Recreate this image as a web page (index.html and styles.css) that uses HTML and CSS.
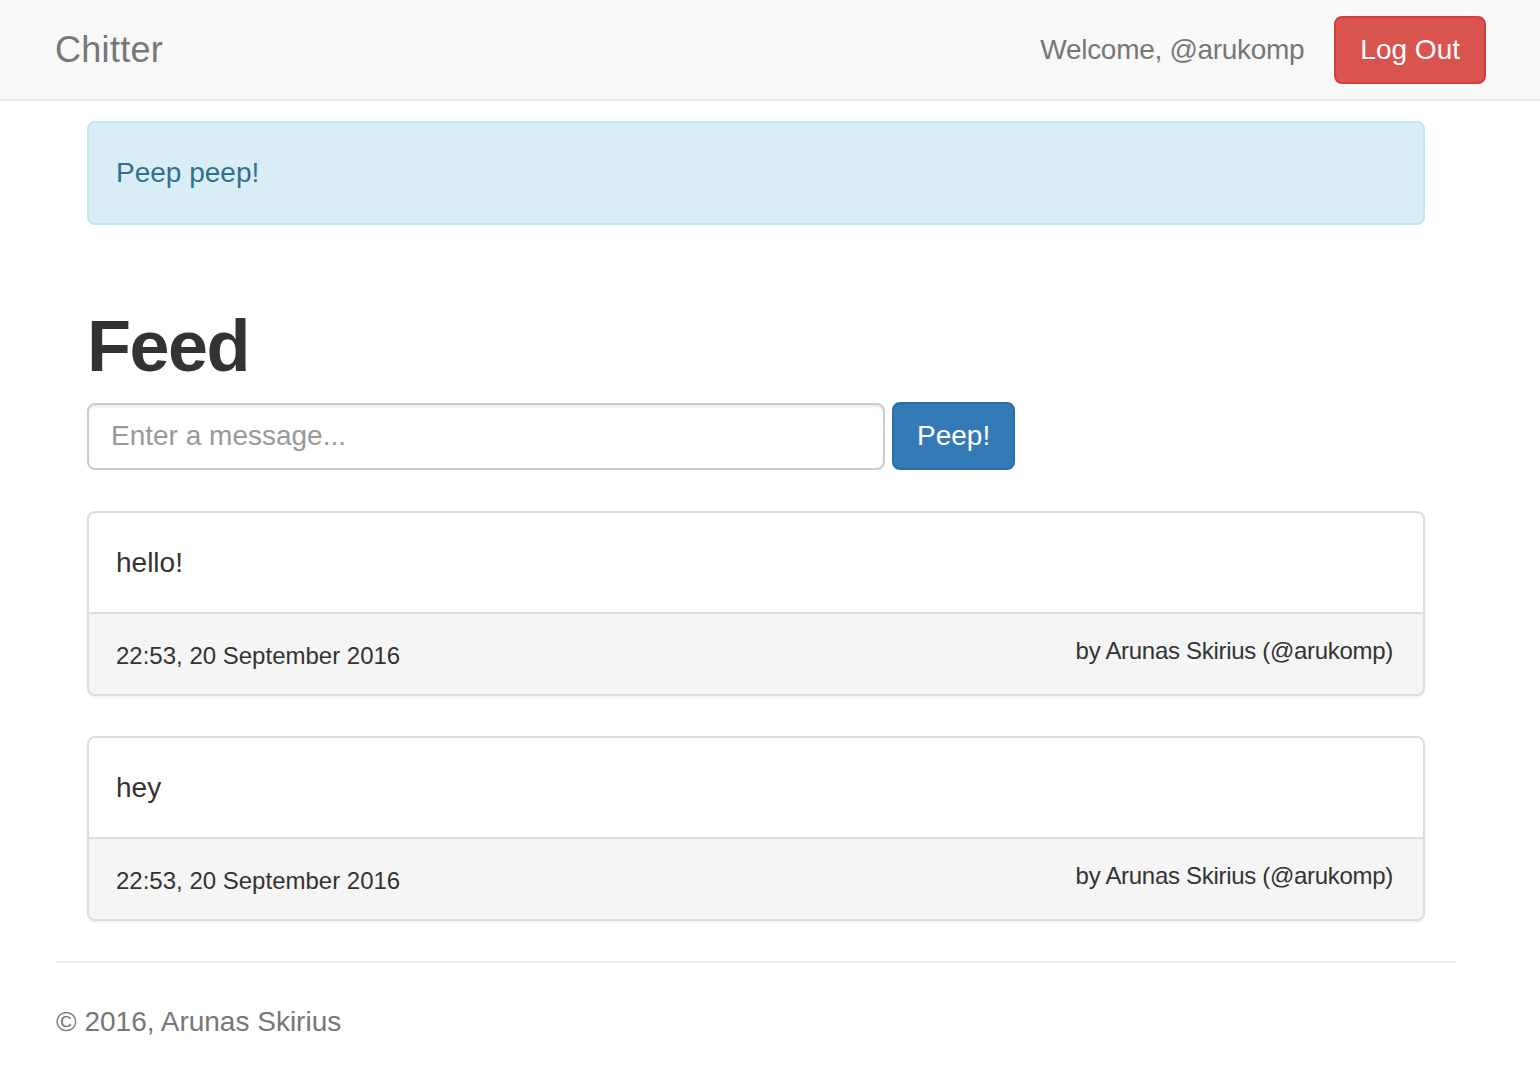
FILE: index.html
```html
<!DOCTYPE html>
<html>
<head>
<meta charset="utf-8">
<link rel="stylesheet" href="styles.css">
<title>Chitter</title>
</head>
<body>
<nav class="navbar">
  <a class="brand">Chitter</a>
  <div class="nav-right">
    <span class="welcome">Welcome, @arukomp</span>
    <button class="btn btn-danger">Log Out</button>
  </div>
</nav>
<main class="content">
  <div class="alert">Peep peep!</div>
  <h1 class="title">Feed</h1>
  <form class="peep-form">
    <input class="form-control" type="text" placeholder="Enter a message...">
    <button class="btn btn-primary" type="button">Peep!</button>
  </form>
  <div class="panel">
    <div class="panel-body">hello!</div>
    <div class="panel-footer">
      <span class="date">22:53, 20 September 2016</span>
      <span class="author">by Arunas Skirius (@arukomp)</span>
    </div>
  </div>
  <div class="panel">
    <div class="panel-body">hey</div>
    <div class="panel-footer">
      <span class="date">22:53, 20 September 2016</span>
      <span class="author">by Arunas Skirius (@arukomp)</span>
    </div>
  </div>
</main>
<footer class="site-footer">
  <hr class="rule">
  <p class="copy">© 2016, Arunas Skirius</p>
</footer>
</body>
</html>
```

FILE: styles.css
```css
* { box-sizing: border-box; }
html, body { margin: 0; padding: 0; background: #fff; }
body {
  font-family: "Liberation Sans", Arial, Helvetica, sans-serif;
  font-size: 28px;
  line-height: 40px;
  color: #333;
}
.navbar {
  height: 101px;
  background: #f8f8f8;
  border-bottom: 2px solid #e7e7e7;
  display: flex;
  align-items: center;
  justify-content: space-between;
  padding: 0 54px 0 55px;
}
.brand {
  font-size: 36px;
  color: #777;
  line-height: 40px;
  letter-spacing: 0.3px;
}
.nav-right { display: flex; align-items: center; }
.welcome { color: #777; font-size: 28px; margin-right: 30px; letter-spacing: -0.3px; }
.btn {
  font-family: inherit;
  font-size: 28px;
  line-height: 40px;
  padding: 12px 24px;
  border-radius: 8px;
  border: 2px solid transparent;
  color: #fff;
  cursor: pointer;
}
.btn-danger { background: #d9534f; border-color: #d43f3a; }
.btn-primary { background: #337ab7; border-color: #2e6da4; }
.content {
  width: 1338px;
  margin: 20px 0 0 87px;
}
.alert {
  background: #d9edf7;
  border: 2px solid #bce8f1;
  color: #31708f;
  border-radius: 8px;
  padding: 30px 27px 30px;
  margin-bottom: 40px;
}
.title {
  font-size: 72px;
  line-height: 79px;
  font-weight: 700;
  letter-spacing: -1.5px;
  margin: 82px 0 16px;
  color: #333;
}
.peep-form { display: flex; align-items: center; gap: 7px; margin: 0 0 41px; }
.form-control {
  width: 798px;
  height: 67px;
  font-family: inherit;
  font-size: 28px;
  border: 2px solid #ccc;
  border-radius: 8px;
  padding: 12px 22px;
  color: #555;
  box-shadow: inset 0 2px 2px rgba(0,0,0,.075);
}
.form-control::placeholder { color: #999; }
.peep-form .btn { height: 68px; padding: 12px 23px; }
.panel {
  border: 2px solid #ddd;
  border-radius: 8px;
  background: #fff;
  box-shadow: 0 2px 2px rgba(0,0,0,.05);
  margin-bottom: 40px;
  overflow: hidden;
}
.panel-body { padding: 30px 27px 29px; }
.panel-footer {
  background: #f5f5f5;
  border-top: 2px solid #ddd;
  padding: 20px 30px 20px 27px;
  display: flex;
  justify-content: space-between;
  align-items: flex-start;
  font-size: 24px;
}
.date { position: relative; top: 2px; }
.author { position: relative; top: -3px; letter-spacing: -0.3px; }
.site-footer { padding: 0 84px 0 56px; margin-top: 0; }
.rule { border: 0; border-top: 2px solid #eee; margin: 0; }
.copy { color: #777; margin: 39px 0 0; }
```
